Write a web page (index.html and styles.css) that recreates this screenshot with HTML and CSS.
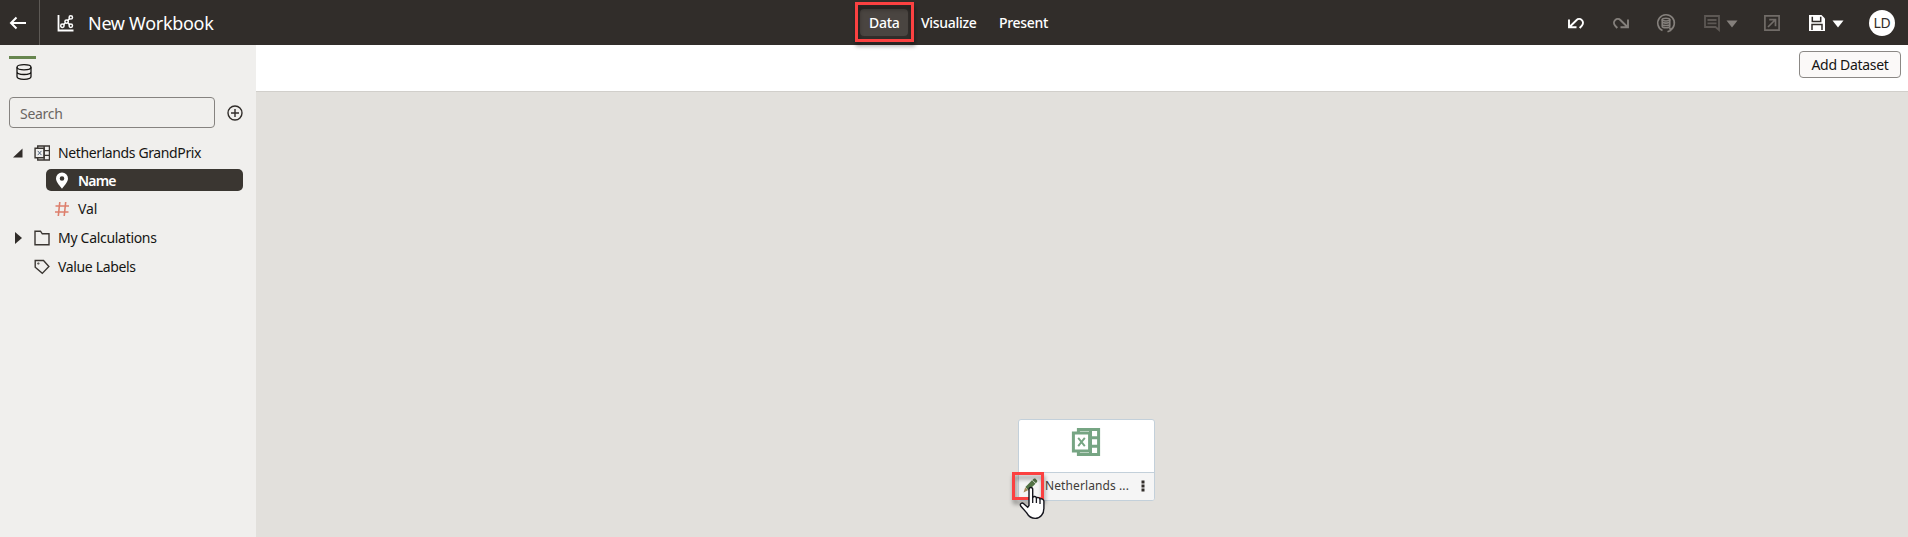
FILE: index.html
```html
<!DOCTYPE html>
<html lang="en">
<head>
<meta charset="utf-8">
<title>New Workbook</title>
<link rel="stylesheet" href="styles.css">
</head>
<body>
<header class="topbar">
  <div class="back"><svg width="18" height="14" viewBox="0 0 18 14"><path d="M17 7H2M7.500 1.500L2 7l5.500 5.500" fill="none" stroke="#fff" stroke-width="2"/></svg></div>
  <div class="title-group">
    <svg class="chart-icon" width="18" height="18" viewBox="0 0 18 18" fill="none" stroke="#fff" stroke-width="1.500"><path d="M1.500 1v15.500H16.500" stroke-width="1.800"/><circle cx="5.400" cy="11.800" r="1.700"/><circle cx="9.600" cy="7.600" r="1.700"/><circle cx="13.800" cy="3.400" r="1.700"/><circle cx="13.800" cy="11.800" r="1.700"/><path d="M6.600 10.600l1.800-1.800M10.800 6.400l1.800-1.800M10.800 8.800l1.800 1.800"/></svg>
    <h1 class="title">New Workbook</h1>
  </div>
  <nav class="tabs">
    <a class="tab tab-active">Data<span class="callout callout-tab"></span></a>
    <a class="tab tab-visualize">Visualize</a>
    <a class="tab tab-present">Present</a>
  </nav>
  <div class="tools">
    <svg class="undo" width="18" height="18" viewBox="0 0 18 18" fill="none" stroke="#fff" stroke-width="1.900"><path d="M2 5.500v7.800h7.500M2.500 13L9.400 6.200a3.800 3.800 0 0 1 5.500 5.400L12.700 14"/></svg>
    <svg class="redo" width="18" height="18" viewBox="0 0 18 18" fill="none" stroke="#85807c" stroke-width="1.900"><path d="M16 5.500v7.800H8.500M15.500 13L8.600 6.200a3.800 3.800 0 0 0-5.500 5.400L5.300 14"/></svg>
    <svg class="refresh" width="20" height="20" viewBox="0 0 20 20" fill="none" stroke="#85807c" stroke-width="1.600"><path d="M6.500 17.500A8.300 8.300 0 1 1 14 17.300M11.500 18.700l3-1.200-.8-3"/><ellipse cx="10" cy="6.600" rx="3.800" ry="1.400"/><path d="M6.200 6.600v6.700c0 2 7.600 2 7.600 0V6.600M6.200 8.800c0 1.700 7.600 1.700 7.600 0M6.200 11.200c0 1.700 7.600 1.700 7.600 0"/></svg>
    <svg class="comment" width="18" height="18" viewBox="0 0 18 18" fill="none" stroke="#5d5854" stroke-width="1.800"><path d="M2 2h14v14l-3.500-3H2zM4.500 6h9M4.500 9.300h9"/></svg>
    <svg class="caret caret-muted" width="12" height="8" viewBox="0 0 12 8"><path d="M.5.5h11L6 7.500z" fill="#85807c"/></svg>
    <svg class="export" width="18" height="18" viewBox="0 0 18 18" fill="none" stroke="#716c68" stroke-width="1.700"><path d="M1.900 1.900h14.200v14.200H1.900zM5 13l7.500-7.500M6.200 5.600h6.300v6.600"/></svg>
    <svg class="save" width="18" height="18" viewBox="0 0 18 18"><path d="M1 1h12.500L17 4.500V17H1z" fill="#fff"/><path d="M4.300 2.700v4.800h8.400V2.700M4 16v-5.500h10V16" fill="none" stroke="#312d2a" stroke-width="1.500"/></svg>
    <svg class="caret" width="12" height="8" viewBox="0 0 12 8"><path d="M.5.5h11L6 7.500z" fill="#fff"/></svg>
    <span class="avatar">LD</span>
  </div>
</header>
<div class="workspace">
  <aside class="sidebar">
    <div class="panel-tab"><svg width="18" height="18" viewBox="0 0 18 18" fill="none" stroke="#161513" stroke-width="1.300"><ellipse cx="9" cy="4.200" rx="7" ry="2.600"/><path d="M2 4.200v9.400c0 3.600 14 3.600 14 0V4.200M2 8.800c0 3.600 14 3.600 14 0"/></svg></div>
    <div class="search-row">
      <div class="search">Search</div>
      <svg width="16" height="16" viewBox="0 0 16 16" fill="none" stroke="#312d2a" stroke-width="1.400"><circle cx="8" cy="8" r="7"/><path d="M8 4v8M4 8h8"/></svg>
    </div>
    <ul class="tree">
      <li class="row">
        <svg class="arrow" width="10" height="10" viewBox="0 0 10 10"><path d="M9.500.5v9H0z" fill="#312d2a"/></svg>
        <svg class="node-icon" width="16" height="16" viewBox="0 0 30 30" fill="none" stroke="#3a3632" stroke-width="2.600"><path d="M7 6V2h22v26H7v-4M19 2v26M19 10.500h10M19 19.500h10"/><path d="M2 6h17v18H2z"/><path d="M7 11l7 8M14 11l-7 8" stroke="#4c6079" stroke-width="1.800"/></svg>
        <span class="t-dataset">Netherlands GrandPrix</span>
      </li>
      <li class="row row-selected">
        <svg class="pin" width="14" height="17" viewBox="0 0 14 17"><path fill-rule="evenodd" d="M7 .5a6 6 0 0 1 6 6C13 10.500 8 15 7 16.800 6 15 1 10.500 1 6.500A6 6 0 0 1 7 .5zm0 3.700a2.300 2.300 0 1 0 0 4.600 2.300 2.300 0 0 0 0-4.600z" fill="#fff"/></svg>
        <span class="t-name">Name</span>
      </li>
      <li class="row row-val">
        <svg width="16" height="16" viewBox="0 0 16 16" fill="none" stroke="#dd7f6c" stroke-width="1.600"><path d="M5.800 1L4.300 15M11.700 1l-1.500 14M1.500 5H15M1 11h13.500"/></svg>
        <span class="t-val">Val</span>
      </li>
      <li class="row row-calc">
        <svg class="arrow" width="10" height="12" viewBox="0 0 10 12"><path d="M2 0v12l7-6z" fill="#312d2a"/></svg>
        <svg class="node-icon" width="16" height="16" viewBox="0 0 16 16" fill="none" stroke="#3a3632" stroke-width="1.400"><path d="M1 1.200h5.500l1.800 2.600H15v11H1z"/></svg>
        <span class="t-calc">My Calculations</span>
      </li>
      <li class="row row-labels">
        <svg class="node-icon" width="16" height="16" viewBox="0 0 16 16" fill="none" stroke="#3a3632" stroke-width="1.400"><path d="M1.200 1.500h8.300l5.400 6-6.600 6.900-7.100-6.200z"/><circle cx="4.400" cy="4.500" r=".4"/></svg>
        <span class="t-labels">Value Labels</span>
      </li>
    </ul>
  </aside>
  <main class="main">
    <div class="main-toolbar"><button class="add">Add Dataset</button></div>
    <div class="canvas">
      <section class="card">
        <div class="card-body"><svg width="30" height="30" viewBox="0 0 30 30" fill="none" stroke="#76a583" stroke-width="3"><path d="M7.400 5V2.400h20.200v25.200H7.400V25M19.500 2v26M19 10.800h9M19 19.200h9"/><path d="M2.400 5.900h16.200v18.200H2.400z"/><path d="M7.200 10.800l6.600 8.400M13.800 10.800l-6.600 8.400" stroke-width="1.900"/></svg></div>
        <div class="card-foot">
          <svg class="pencil" width="16" height="16" viewBox="0 0 16 16"><path d="M1.500 14.500l1.700-5L6 12.200z" fill="#a58a58"/><path d="M3.400 8.900L10 2.300l3.500 3.500-7.200 6.700zM10.400 1.900L12 .5h1.300l1.900 2v1.300l-1.300 1.400z" fill="#537345"/></svg>
          <span class="card-label">Netherlands ...</span>
          <svg class="kebab" width="4" height="12" viewBox="0 0 4 12" fill="#312d2a"><path d="M.5.500h3v3h-3zM.5 4.500h3v3h-3zM.5 8.500h3v3h-3z"/></svg>
        </div>
        <span class="callout callout-edit"></span>
        <svg class="cursor" width="27" height="34" viewBox="0 0 27 34"><path d="M10 19.500V3.500c0-2.700 3.700-2.700 3.700 0v7.800c.8-1.200 3.300-1 3.700.5 1.200-.8 3.100-.2 3.500 1.200 1.700-.8 4 .1 4 2.200v7c0 6-3.600 10.200-8.700 10.200-4.300 0-6.700-2.200-8.500-5.500L1.700 20c-1.200-2.200 1.200-3.800 3-2.300l4 3.600z" fill="#fff" stroke="#15151d" stroke-width="1.400"/><path d="M13.700 11v6M17.400 12v5M21 13.500V18" stroke="#15151d" stroke-width="1.300"/></svg>
      </section>
    </div>
  </main>
</div>
</body>
</html>
```

FILE: styles.css
```css
* { box-sizing: border-box; }
body { margin: 0; height: 537px; overflow: hidden; display: flex; flex-direction: column; font: 14px/20px "Noto Sans", "Open Sans", sans-serif; letter-spacing: -.3px; color: #161513; }
svg { display: block; flex: none; }
.topbar { height: 45px; flex: none; display: grid; grid-template-columns: 40px 820px 1fr auto; background: #312d2a; color: #fff; }
.back { border-right: 1px solid #5d5955; display: flex; align-items: center; padding-left: 9px; }
.title-group { display: flex; align-items: center; padding-left: 17px; gap: 13px; }
.title { margin: 0; font-size: 18px; line-height: 24px; font-weight: 400; white-space: nowrap; }
.tabs { display: flex; align-items: center; font-weight: 500; }
.tab { height: 27px; line-height: 28px; }
.tab-active { position: relative; width: 48px; padding-left: 9px; border-radius: 4px; background: #4a4541; }
.tab-visualize { width: 78px; padding-left: 13px; }
.tab-present { padding-left: 13px; }
.callout { position: absolute; border: 3px solid #fb4141; pointer-events: none; filter: drop-shadow(1px 4px 2px rgba(0, 0, 0, .4)); }
.callout-tab { left: -5px; top: -7px; width: 59px; height: 40px; }
.tools { display: flex; align-items: center; padding-right: 13px; }
.redo { margin-left: 27px; }
.refresh { margin-left: 26px; }
.comment { margin-left: 27px; }
.caret { margin: 2px 0 0 6px; }
.caret-muted { margin-left: 5px; }
.export { margin-left: 25px; }
.save { margin-left: 27px; }
.avatar { width: 26px; height: 26px; margin-left: 25px; border-radius: 50%; background: #fff; color: #312d2a; text-align: center; line-height: 26px; font-size: 14px; }
.workspace { flex: 1; display: flex; min-height: 0; }
.sidebar { width: 256px; flex: none; background: #f0efed; padding-top: 11px; }
.panel-tab { width: 27px; height: 41px; margin-left: 9px; border-top: 3px solid #67864f; padding: 4px 0 0 6px; }
.search-row { display: flex; align-items: center; margin-left: 9px; gap: 12px; }
.search { width: 206px; height: 31px; border: 1px solid #868380; border-radius: 4px; padding-left: 10px; line-height: 31px; color: #6a6662; }
.tree { list-style: none; margin: 13px 0 0; padding: 0; }
.row { height: 24px; display: flex; align-items: center; white-space: nowrap; padding-left: 13px; }
.node-icon { margin: 0 8px 0 11px; }
.t-dataset { letter-spacing: -.38px; }
.row-selected { margin: 4px 13px 0 46px; height: 22px; padding-left: 9px; gap: 9px; border-radius: 5px; background: #3a3631; color: #fff; font-weight: 600; }
.t-name { letter-spacing: -.8px; padding-top: 2px; }
.t-labels { letter-spacing: -.35px; }
.row-val { margin-top: 6px; padding-left: 54px; gap: 8px; }
.t-val { letter-spacing: -.1px; }
.row-calc, .row-labels { margin-top: 5px; }
.row-labels { padding-left: 23px; }
.main { flex: 1; display: flex; flex-direction: column; min-width: 0; }
.main-toolbar { height: 47px; flex: none; background: #fff; border-bottom: 1px solid #d1cfcb; display: flex; justify-content: flex-end; align-items: flex-start; padding: 6px 7px 0 0; }
.add { width: 102px; height: 27px; padding: 1px 0 0; border: 1px solid #8b8885; border-radius: 4px; background: #fbf9f8; font: 14px/24px "Noto Sans", sans-serif; letter-spacing: -.3px; color: #161513; white-space: nowrap; }
.canvas { flex: 1; position: relative; background: #e2e0dc; }
.card { position: absolute; left: 762px; top: 327px; width: 137px; height: 82px; border: 1px solid #c3d0da; border-radius: 3px; background: #fff; }
.card-body { height: 53px; padding: 7px 0 0 52px; border-bottom: 1px solid #c3d0da; }
.card-foot { height: 27px; display: flex; align-items: center; background: #f5f5f5; padding: 0 0 2px 3px; font-size: 12px; letter-spacing: .1px; color: #403c38; border-radius: 0 0 2px 2px; }
.card-label { width: 90px; margin-left: 7px; white-space: nowrap; }
.kebab { margin-left: 6px; }
.callout-edit { left: -7px; top: 52px; width: 32px; height: 28px; }
.cursor { position: absolute; left: 0; top: 66px; }
```
